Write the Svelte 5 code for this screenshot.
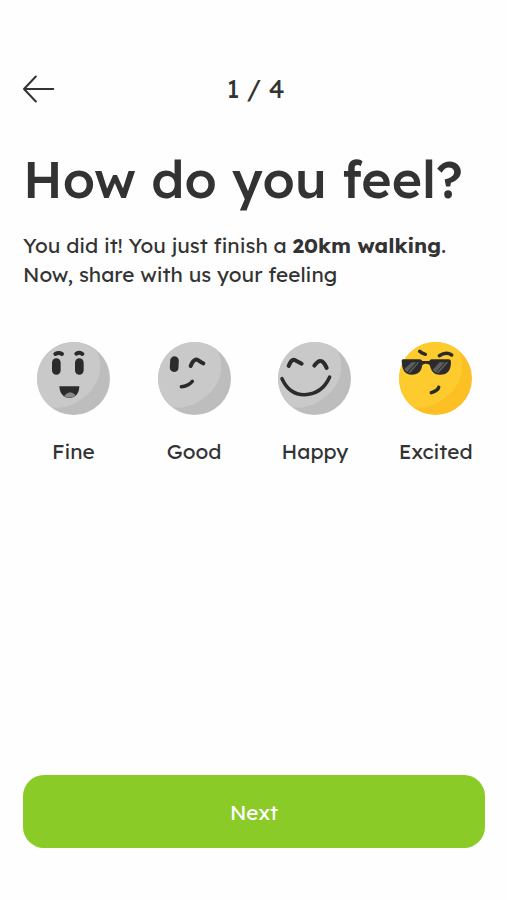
<script lang="ts">
	type Mood = 'fine' | 'good' | 'happy' | 'excited';

	const moods: { id: Mood; label: string }[] = [
		{ id: 'fine', label: 'Fine' },
		{ id: 'good', label: 'Good' },
		{ id: 'happy', label: 'Happy' },
		{ id: 'excited', label: 'Excited' }
	];

	let selected = $state<Mood>('excited');
</script>

<main class="screen">
	<header class="topbar">
		<button class="topbar__back" type="button" aria-label="Back">
			<svg viewBox="0 0 32 28" aria-hidden="true">
				<path d="M12.8 1.5 1 14l11.8 12.5M1 14h29.3" />
			</svg>
		</button>
		<span class="topbar__step">1 / 4</span>
	</header>

	<h1 class="title">How do you feel?</h1>
	<p class="intro">
		<span class="intro__done">You did it! You just finish a <strong>20km walking</strong>.</span>
		<span class="intro__ask">Now, share with us your feeling</span>
	</p>

	<div class="moods">
		{#each moods as mood (mood.id)}
			<button
				class="mood mood--{mood.id}"
				class:mood--selected={selected === mood.id}
				type="button"
				aria-pressed={selected === mood.id}
				onclick={() => (selected = mood.id)}
			>
				<svg class="face" viewBox="0 0 219 219" aria-hidden="true">
					<circle class="face__shade" cx="109.5" cy="109.5" r="109.5" />
					<path
						class="face__skin"
						d="M178 24C202 72 188 125 148 160C115 188 82 202 42 196A109.5 109.5 0 1 1 178 24Z"
					/>
					{#if mood.id === 'fine'}
						<rect class="ink" x="45" y="49" width="26" height="49" rx="13" />
						<rect class="ink" x="114" y="49" width="26" height="49" rx="13" />
						<path class="line line--bold" d="M55 36Q65 30 75 36M118 35Q128 29 136 36" />
						<path class="ink" d="M67 133H127C127 154 115 168 98 168C80 168 68 155 67 133Z" />
						<path class="tongue" d="M81 162Q98 141 116 160Q100 174 81 162Z" />
					{:else if mood.id === 'good'}
						<rect class="ink" x="36" y="43" width="26" height="47" rx="13" transform="rotate(3 49 66)" />
						<path class="line line--bold" d="M98 72C102 61 107 55 113 53C120 51 125 60 136 64" />
						<path class="line" d="M70 134C86 133 96 126 103 118" />
					{:else if mood.id === 'happy'}
						<path class="line line--bold" d="M32 72C37 59 43 52 50 54L71 65M109 71C117 59 126 55 132 58C138 62 143 70 146 78" />
						<path class="line" d="M12 110C28 145 50 158 79 158C114 157 140 139 155 105" />
					{:else}
						<path class="line" d="M62 28C66 32 72 35 79 37" />
						<path class="line" d="M121 41C132 34 146 31 158 39" />
						<path class="ink" d="M8 56Q8 52 13 52H62Q68 52 70 57H91Q93 52 98 52H149Q156 52 156 59C156 85 146 98 123 98C101 98 97 85 92 69Q81 61 70 69C67 89 58 98 39 98C17 98 9 83 8 56Z" />
						<path class="glint" d="M38 61H52L24 91L16 82ZM56 61H61L34 92H27ZM122 61H137L110 92L101 83ZM141 61H148L119 93H112Z" />
						<path class="line" d="M97 152C110 148 118 142 119 136" />
					{/if}
				</svg>
				<span class="mood__label">{mood.label}</span>
			</button>
		{/each}
	</div>

	<button class="next" type="button">Next</button>
</main>

<style>
	:global(body) {
		margin: 0;
		background: #fefefe;
	}

	button {
		padding: 0;
		border: 0;
		background: none;
		color: inherit;
		font: inherit;
		cursor: pointer;
	}

	.screen {
		display: flex;
		flex-direction: column;
		box-sizing: border-box;
		min-height: 900px;
		padding: 74px 22px 52px 23px;
		color: #333;
		font-family: Lexend, 'Lexend Deca', Inter, 'Liberation Sans', sans-serif;
		/* single-storey a */
		font-feature-settings: 'cv11';
	}

	.topbar {
		display: grid;
		grid-template-columns: 32px 1fr 29px;
		align-items: center;
		height: 30px;
	}

	.topbar__back {
		height: 28px;
	}

	.topbar__back svg {
		display: block;
		width: 32px;
		height: 28px;
		fill: none;
		stroke: #333;
		stroke-width: 2;
		stroke-linecap: round;
		stroke-linejoin: round;
	}

	.topbar__step {
		font-size: 26px;
		line-height: 30px;
		text-align: center;
	}

	.title {
		margin: 45px 0 0;
		font-size: 51.8px;
		font-weight: 500;
		line-height: 60px;
		white-space: nowrap;
	}

	.intro {
		margin: 22px 0 0;
		font-size: 20.75px;
		line-height: 28.5px;
		white-space: nowrap;
	}

	.intro span {
		display: block;
	}

	.intro strong {
		font-weight: 700;
	}

	.moods {
		display: grid;
		grid-template-columns: repeat(4, 1fr);
		margin: 53.5px -11px 0 -10px;
	}

	.mood {
		display: flex;
		flex-direction: column;
		align-items: center;
	}

	.mood__label {
		margin-top: 23px;
		font-size: 20.75px;
		line-height: 26px;
	}

	.face {
		width: 73px;
		height: 73px;
	}

	.face__shade {
		fill: #bdbdbd;
	}

	.face__skin {
		fill: #c9c9c9;
	}

	.mood--selected .face__shade {
		fill: #fcbf24;
	}

	.mood--selected .face__skin {
		fill: #fecb2f;
	}

	.ink {
		fill: #2b2b2b;
	}

	.line {
		fill: none;
		stroke: #2b2b2b;
		stroke-width: 10.5;
		stroke-linecap: round;
		stroke-linejoin: round;
	}

	.line--bold {
		stroke-width: 12;
	}

	.tongue {
		fill: #888;
	}

	.glint {
		fill: #5e5d5d;
	}

	.next {
		height: 73px;
		margin-top: auto;
		border-radius: 21px;
		background: #8acb27;
		color: #fff;
		font-size: 20.75px;
	}
</style>
